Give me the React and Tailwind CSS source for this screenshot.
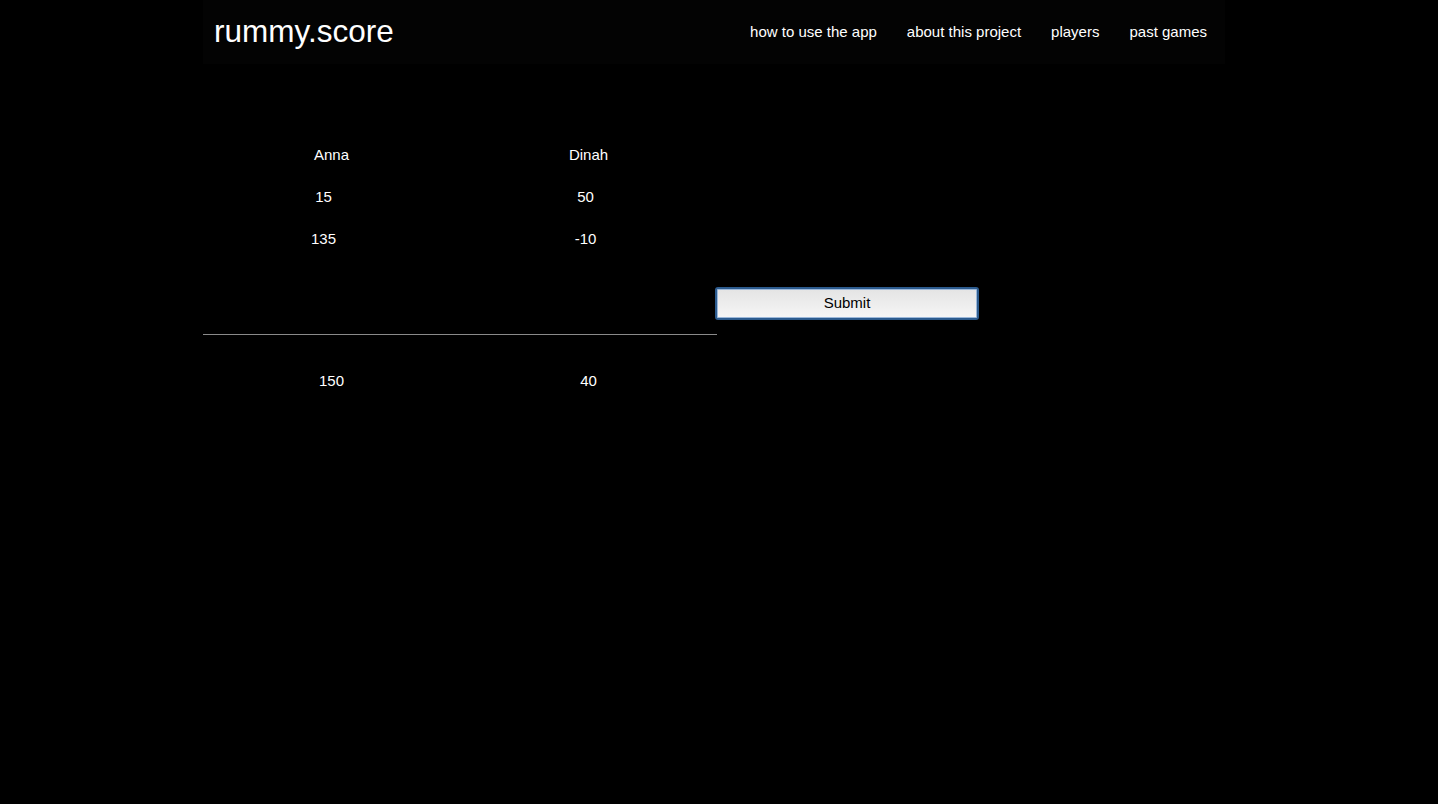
import React from 'react';

const players = [
  { name: 'Anna', scores: [15, 135], total: 150, shift: 'pr-4' },
  { name: 'Dinah', scores: [50, -10], total: 40, shift: 'pr-[6px]' },
];

const links = ['how to use the app', 'about this project', 'players', 'past games'];

export default function App() {
  return (
    <div className="min-h-screen bg-black text-white font-['Liberation_Sans',Arial,sans-serif]">
      <div className="mx-auto w-[1032px]">
        {/* Header */}
        <header className="h-16 w-[1022px] bg-[#030303] flex items-center justify-between pl-[11px] pr-[18px]">
          <h1 className="text-[31.5px] leading-none">rummy.score</h1>
          <nav className="flex items-center gap-[30px] text-[15px]">
            {links.map((l) => (
              <a key={l} href="#" className="text-white">{l}</a>
            ))}
          </nav>
        </header>

        {/* Score table */}
        <main className="mt-[70px] text-[15px]">
          <div className="grid grid-cols-[257px_257px]">
            {players.map((p) => (
              <div key={p.name} className="h-[42px] flex items-center justify-center">{p.name}</div>
            ))}
          </div>
          {[0, 1].map((r) => (
            <div key={r} className="grid grid-cols-[257px_257px]">
              {players.map((p) => (
                <div key={p.name} className={`h-[42px] flex items-center justify-center ${p.shift}`}>
                  {p.scores[r]}
                </div>
              ))}
            </div>
          ))}

          <div className="mt-[27px] grid grid-cols-[257px_255px_264px]">
            <div />
            <div />
            <button className="h-[33px] rounded-[3px] border-2 border-[#2c5b8e] bg-gradient-to-b from-[#e4e4e4] to-[#f6f6f6] text-black text-[15px] shadow-[inset_0_0_0_1px_#9bb8da]">
              Submit
            </button>
          </div>

          <div className="mt-[14px] h-px w-[514px] bg-[#8a8a8a]" />

          <div className="mt-[25px] grid grid-cols-[257px_257px]">
            {players.map((p) => (
              <div key={p.name} className="h-[42px] flex items-center justify-center">{p.total}</div>
            ))}
          </div>
        </main>
      </div>
    </div>
  );
}
